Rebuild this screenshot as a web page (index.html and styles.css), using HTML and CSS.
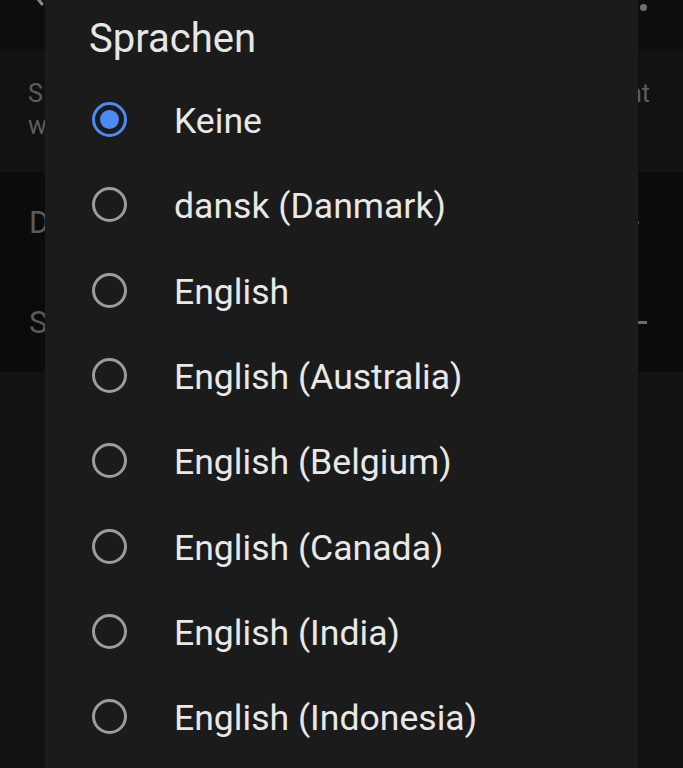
FILE: index.html
```html
<!DOCTYPE html>
<html lang="de">
<head>
<meta charset="utf-8">
<title>Sprachen</title>
<link rel="stylesheet" href="styles.css">
</head>
<body>
<div class="screen">
  <header class="topbar">
    <svg class="back" width="20" height="10" viewBox="0 0 20 10"><path d="M4 -6 L12 4" stroke="#8a8a8a" stroke-width="3" fill="none" stroke-linecap="round"/></svg>
    <span class="kebab"></span>
  </header>
  <section class="intro">
    <p class="line"><span>S&#8202; prache</span><span>erkannt</span></p>
    <p class="line"><span>wird.</span></p>
  </section>
  <section class="settings">
    <div class="setting"><span>Darstellung</span><span class="mark dot"></span></div>
    <div class="setting"><span>Schriftgröße</span><span class="mark dash"></span></div>
  </section>
  <section class="rest"></section>

  <div class="dialog">
    <h1 class="title">Sprachen</h1>
    <ul class="options">
      <li class="option"><span class="radio checked"></span><span class="label">Keine</span></li>
      <li class="option"><span class="radio"></span><span class="label">dansk (Danmark)</span></li>
      <li class="option"><span class="radio"></span><span class="label">English</span></li>
      <li class="option"><span class="radio"></span><span class="label">English (Australia)</span></li>
      <li class="option"><span class="radio"></span><span class="label">English (Belgium)</span></li>
      <li class="option"><span class="radio"></span><span class="label">English (Canada)</span></li>
      <li class="option"><span class="radio"></span><span class="label">English (India)</span></li>
      <li class="option"><span class="radio"></span><span class="label">English (Indonesia)</span></li>
    </ul>
  </div>
</div>
</body>
</html>
```

FILE: styles.css
```css
* { box-sizing: border-box; }
html, body {
  margin: 0;
  padding: 0;
  background: #0d0d0d;
  font-family: Roboto, "Noto Sans", sans-serif;
  overflow: hidden;
}
.screen {
  position: relative;
  width: 683px;
  height: 768px;
  overflow: hidden;
}
.topbar {
  height: 50px;
  background: #0e0e0e;
  display: flex;
  justify-content: space-between;
  align-items: flex-start;
  padding: 0 36px 0 30px;
}
.back { display: block; }
.kebab {
  width: 7px;
  height: 7px;
  border-radius: 50%;
  background: #707070;
  margin-top: 4px;
}
.intro {
  height: 122px;
  background: #121212;
  padding: 28px 33px 0 28px;
}
.line {
  margin: 0;
  font-size: 25px;
  line-height: 32px;
  color: #5e5e5e;
  white-space: nowrap;
  display: flex;
  justify-content: space-between;
}
.settings {
  height: 200px;
  background: #0b0b0b;
}
.setting {
  height: 100px;
  display: flex;
  align-items: center;
  justify-content: space-between;
  padding: 0 36px 0 29px;
  font-size: 31px;
  color: #5a5a5a;
}
.mark { display: block; background: #6a6a6a; }
.mark.dot { width: 3px; height: 3px; border-radius: 50%; margin-right: 8px; }
.mark.dash { width: 9px; height: 3px; }
.rest {
  height: 396px;
  background: #121212;
}

.dialog {
  position: absolute;
  left: 45px;
  top: -30px;
  width: 593px;
  height: 830px;
  background: #1b1b1b;
  border-radius: 28px;
}
.title {
  margin: 0;
  padding: 49px 0 18px 44px;
  font-size: 40px;
  line-height: 40px;
  font-weight: 400;
  color: #e6e6e6;
}
.options {
  list-style: none;
  margin: 0;
  padding: 0;
}
.option {
  height: 85.33px;
  display: flex;
  align-items: center;
  padding-left: 46.5px;
}
.radio {
  flex: none;
  width: 35px;
  height: 35px;
  border-radius: 50%;
  border: 3px solid #9c9c9c;
  display: flex;
  align-items: center;
  justify-content: center;
}
.radio.checked {
  border-color: #4c8bf5;
  border-width: 3.5px;
}
.radio.checked::after {
  content: "";
  width: 19px;
  height: 19px;
  border-radius: 50%;
  background: #4c8bf5;
}
.label {
  margin-left: 47.5px;
  padding-top: 3px;
  font-size: 35.6px;
  color: #e8e8e8;
  white-space: nowrap;
}
```
